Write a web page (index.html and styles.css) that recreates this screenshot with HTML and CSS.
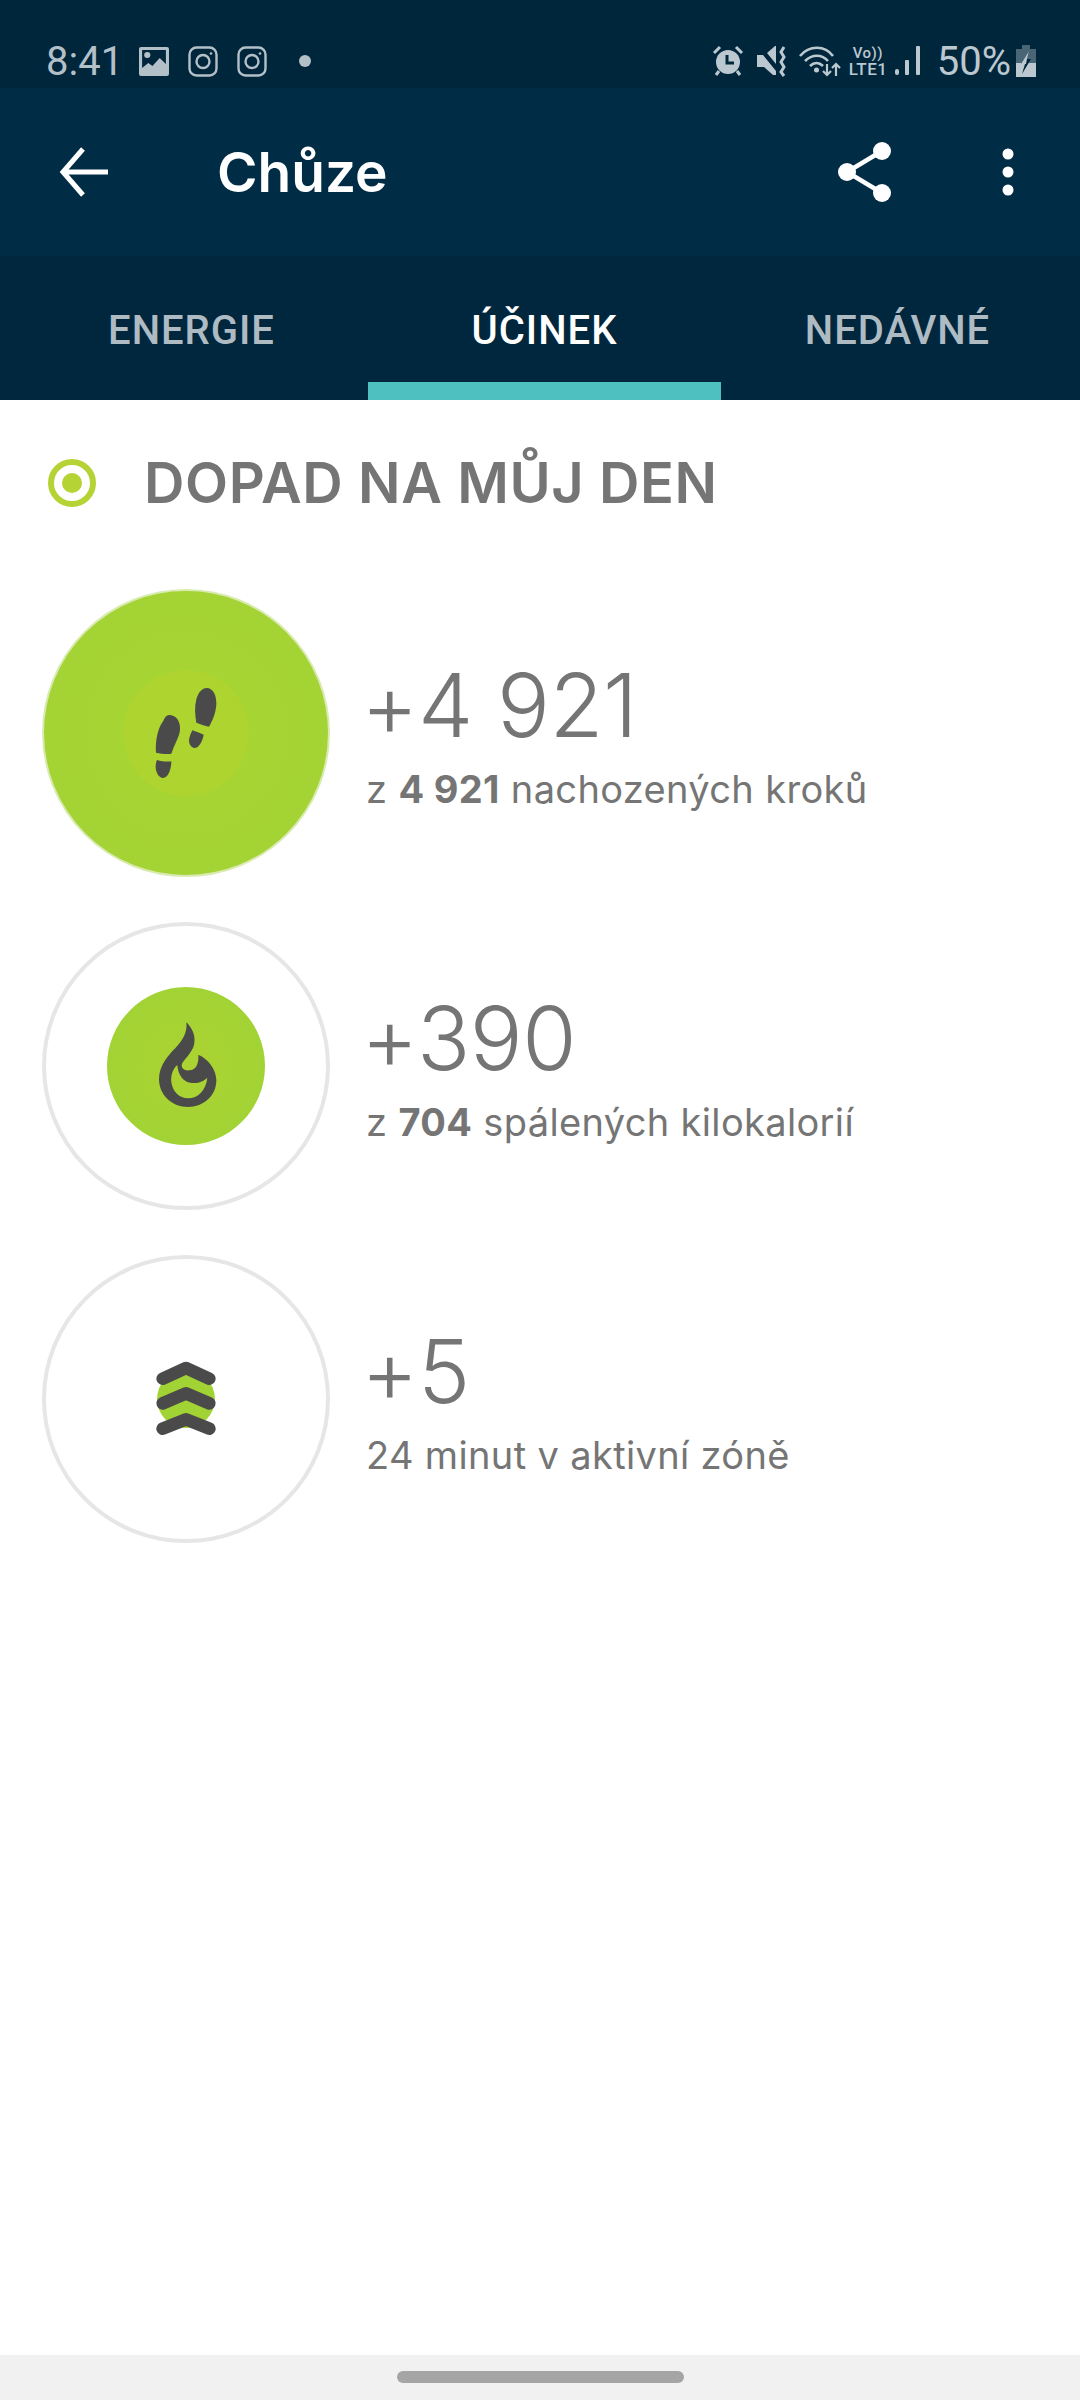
FILE: index.html
```html
<!DOCTYPE html>
<html lang="cs">
<head>
    <meta charset="UTF-8">
    <meta name="viewport" content="width=device-width, initial-scale=1">
    <title>Chůze</title>
    <link rel="stylesheet" href="styles.css">
</head>
<body>
    <div class="status-bar">
        <span class="clock">8:41</span>
        <svg class="st-icon st-image" width="30" height="29" viewBox="0 0 29 29" preserveAspectRatio="none">
            <path fill="#b4c0c8" fill-rule="evenodd" d="M2 0h25a2 2 0 0 1 2 2v25a2 2 0 0 1-2 2H2a2 2 0 0 1-2-2V2a2 2 0 0 1 2-2z"/>
            <path fill="#00263c" d="M3 3h23v14l-6-6-7 8-4-3-6 5z"/>
            <circle cx="8" cy="8" r="3" fill="#b4c0c8"/>
        </svg>
        <svg class="st-icon st-insta" width="30" height="31" viewBox="0 0 30 31" fill="none" stroke="#b4c0c8" stroke-width="2.4">
            <rect x="1.5" y="1.5" width="27" height="28" rx="7"/>
            <circle cx="15" cy="15.5" r="6.5"/>
            <circle cx="23" cy="7.5" r="1.3" fill="#b4c0c8" stroke="none"/>
        </svg>
        <svg class="st-icon st-insta" width="30" height="31" viewBox="0 0 30 31" fill="none" stroke="#b4c0c8" stroke-width="2.4">
            <rect x="1.5" y="1.5" width="27" height="28" rx="7"/>
            <circle cx="15" cy="15.5" r="6.5"/>
            <circle cx="23" cy="7.5" r="1.3" fill="#b4c0c8" stroke="none"/>
        </svg>
        <span class="st-dot"></span>

        <div class="status-right">
            <svg width="32" height="32" viewBox="0 0 32 32">
                <circle cx="16" cy="17" r="12" fill="#bcc8cf"/>
                <path d="M15 10v8h7" fill="none" stroke="#00263c" stroke-width="3"/>
                <path d="M2 8l6-6M30 8l-6-6M7 26l-3 4M25 26l3 4" stroke="#bcc8cf" stroke-width="3" fill="none"/>
            </svg>
            <svg class="st-mute" width="32" height="32" viewBox="0 0 32 32">
                <path fill="#bcc8cf" d="M1 10h6l13 16v4h-3L8 22H1zM11 8l8-7h1v18z"/>
                <path d="M28 2l-3 5 3 5-3 5 3 5-3 5 3 4" fill="none" stroke="#bcc8cf" stroke-width="3"/>
            </svg>
            <svg class="st-wifi" width="42" height="32" viewBox="0 0 42 32" fill="none" stroke="#bcc8cf" stroke-width="2.6">
                <path d="M1 11C10 0 26 0 34 11"/>
                <path d="M6 16c7-7 17-7 23 0"/>
                <path d="M11 21c4-4 9-4 13 0"/>
                <circle cx="17.5" cy="25" r="2.5" fill="#bcc8cf" stroke="none"/>
                <path d="M28 19v11M24 26l4 4 4-4M37 31V19M33 23l4-4 4 4" stroke-width="2.2"/>
            </svg>
            <div class="volte">
                <span class="vo">Vo))</span>
                <span class="lte">LTE1</span>
            </div>
            <svg class="st-signal" width="26" height="30" viewBox="0 0 26 30" fill="#bcc8cf">
                <rect x="0" y="23" width="4" height="6" rx="2"/>
                <rect x="10" y="14" width="4" height="15" rx="1"/>
                <rect x="21" y="0" width="4" height="29" rx="1"/>
            </svg>
            <span class="battery-pct">50%</span>
            <svg class="st-battery" width="20" height="32" viewBox="0 0 20 32">
                <path fill="#4a6575" d="M6 0h8v4h6v14H0V4h6z"/>
                <path fill="#bcc8cf" d="M0 18h20v14H0z"/>
                <path fill="#00263c" d="M13 6L5 19h4l-3 10 9-15h-4l2-8z"/>
                <path fill="#bcc8cf" d="M13 6L5 19h5l1-5h-0l2-8z"/>
            </svg>
        </div>
    </div>

    <div class="app-bar">
        <svg class="back" width="64" height="64" viewBox="0 0 64 64" fill="none" stroke="#fff" stroke-width="5">
            <path d="M36 9L16 32l20 23M16 32h45"/>
        </svg>
        <span class="title">Chůze</span>
        <svg class="share" width="60" height="64" viewBox="0 0 60 64" fill="#fff">
            <path d="M49 11L14 32l35 21" fill="none" stroke="#fff" stroke-width="4.5"/>
            <circle cx="49" cy="11" r="9"/>
            <circle cx="14" cy="32" r="9"/>
            <circle cx="49" cy="53" r="9"/>
        </svg>
        <svg class="more" width="12" height="48" viewBox="0 0 12 48" fill="#fff">
            <circle cx="6" cy="6" r="5.5"/>
            <circle cx="6" cy="24" r="5.5"/>
            <circle cx="6" cy="42" r="5.5"/>
        </svg>
    </div>

    <div class="tabs">
        <div class="tab">ENERGIE</div>
        <div class="tab active">ÚČINEK</div>
        <div class="tab">NEDÁVNÉ</div>
    </div>

    <div class="content">
        <div class="section-head">
            <span class="target"><span class="target-dot"></span></span>
            <h2>DOPAD NA MŮJ DEN</h2>
        </div>

        <div class="row">
            <div class="badge badge-full">
                <svg width="180" height="180" viewBox="-12 9 540 540" fill="#4a4a4a">
                    <path d="M206 225c22 0 36 18 34 44-2 22-16 42-26 72-12 2-32 0-46-3-2-34 4-72 22-96 5-10 10-17 16-17z"/>
                    <path d="M171 360c14 4 30 6 43 4 0 16-6 48-24 50-16 0-24-22-23-36 0-6 2-14 4-18z"/>
                    <path d="M320 144c20 0 30 24 29 50-2 26-12 48-22 66-12-2-28-8-38-12-4-24-6-46 0-70 6-22 18-34 31-34z"/>
                    <path d="M277 271c10 4 24 8 34 13-2 14-12 40-28 40-14-2-18-20-15-30 2-8 5-16 9-23z"/>
                </svg>
            </div>
            <div class="row-text">
                <div class="amount">+4 921</div>
                <div class="detail">z <strong>4 921</strong> nachozených kroků</div>
            </div>
        </div>

        <div class="row">
            <div class="badge">
                <div class="badge-inner">
                    <svg width="158" height="158" viewBox="22 22 474 474">
                        <path fill="#4a4a4a" fill-rule="evenodd" d="M260 128c16 16 28 38 24 62-3 24-24 42-36 60-6 12 2 24 22 22 16-2 28-14 26-46 24 8 54 40 54 76 0 46-38 80-85 80-48 0-87-36-87-84 0-40 26-70 50-94 20-20 36-46 32-76zM233 256c-14 12-20 32-18 52 4 28 24 48 50 48 30 0 54-24 58-62-10 10-26 18-46 16-28-2-42-26-44-54z"/>
                    </svg>
                </div>
            </div>
            <div class="row-text">
                <div class="amount">+390</div>
                <div class="detail">z <strong>704</strong> spálených kilokalorií</div>
            </div>
        </div>

        <div class="row">
            <div class="badge">
                <svg width="140" height="120" viewBox="-12 -3 420 360">
                    <circle cx="198" cy="177" r="87" fill="#a2d335"/>
                    <g fill="none" stroke="#4a4a4a" stroke-width="38" stroke-linecap="round" stroke-linejoin="round">
                        <path d="M128 116L198 84l70 32"/>
                        <path d="M128 190L198 160l70 30"/>
                        <path d="M128 266L198 238l70 28"/>
                    </g>
                </svg>
            </div>
            <div class="row-text">
                <div class="amount">+5</div>
                <div class="detail">24 minut v aktivní zóně</div>
            </div>
        </div>
    </div>

    <div class="nav-bar">
        <span class="nav-pill"></span>
    </div>
</body>
</html>
```

FILE: styles.css
```css
* {
    box-sizing: border-box;
}
body {
    margin: 0;
    width: 1080px;
    height: 2400px;
    display: flex;
    flex-direction: column;
    background-color: #fff;
    font-family: Inter, sans-serif;
    color: #757575;
}

/* status bar */
.status-bar {
    height: 88px;
    flex: none;
    display: flex;
    align-items: center;
    padding: 34px 44px 0 46px;
    background-color: #00263c;
}
.clock {
    font-family: Roboto, sans-serif;
    font-size: 40px;
    color: #b4c0c8;
    width: 93px;
}
.st-icon {
    flex: none;
}
.st-insta {
    margin-left: 19px;
}
.st-dot {
    width: 12px;
    height: 12px;
    margin-left: 32px;
    border-radius: 50%;
    background-color: #b4c0c8;
}
.status-right {
    margin-left: auto;
    display: flex;
    align-items: center;
    color: #bcc8cf;
}
.st-mute {
    margin-left: 12px;
}
.st-wifi {
    margin-left: 11px;
}
.volte {
    margin-left: 8px;
    width: 38px;
    display: flex;
    flex-direction: column;
    font-family: Roboto, sans-serif;
    font-weight: 500;
    line-height: 16px;
}
.vo {
    font-size: 15px;
    letter-spacing: 0.5px;
    padding-left: 4px;
}
.lte {
    font-size: 17px;
    letter-spacing: 0.5px;
}
.st-signal {
    margin-left: 8px;
}
.battery-pct {
    margin-left: 16px;
    font-family: Roboto, sans-serif;
    font-size: 40px;
}
.st-battery {
    margin-left: 5px;
}

/* app bar */
.app-bar {
    height: 168px;
    flex: none;
    display: flex;
    align-items: center;
    padding: 0 66px 0 47px;
    background-color: #002d45;
}
.back {
    flex: none;
}
.title {
    margin-left: 106px;
    font-size: 55px;
    font-weight: 600;
    color: #fff;
}
.share {
    margin-left: auto;
}
.more {
    margin-left: 109px;
}

/* tabs */
.tabs {
    height: 144px;
    flex: none;
    display: flex;
    padding-left: 15px;
    background-color: #00273d;
}
.tab {
    width: 353px;
    display: flex;
    align-items: center;
    justify-content: center;
    padding-top: 22px;
    border-bottom: 18px solid transparent;
    font-family: Roboto, sans-serif;
    font-size: 40px;
    font-weight: 500;
    letter-spacing: 1px;
    color: #aebbc3;
}
.tab.active {
    color: #fff;
    border-bottom-color: #4fc0c0;
}

/* content */
.content {
    flex: 1;
    padding: 59px 42px 0;
}
.section-head {
    display: flex;
    align-items: center;
    height: 48px;
    margin-bottom: 82px;
}
.target {
    width: 48px;
    height: 48px;
    margin-left: 6px;
    display: flex;
    align-items: center;
    justify-content: center;
    border: 6px solid #b5d335;
    border-radius: 50%;
}
.target-dot {
    width: 20px;
    height: 20px;
    border-radius: 50%;
    background-color: #b5d335;
}
h2 {
    margin: 0 0 0 48px;
    font-size: 56px;
    font-weight: 600;
    letter-spacing: 0.6px;
    color: #757575;
}
.row {
    display: flex;
    align-items: center;
    margin-bottom: 45px;
}
.badge {
    width: 288px;
    height: 288px;
    flex: none;
    display: flex;
    align-items: center;
    justify-content: center;
    border: 4px solid #e6e6e6;
    border-radius: 50%;
}
.badge-full {
    border: 2px solid #d9ebb0;
    background: radial-gradient(circle, #aed430 0, #aed430 62px, #a5d433 64px, #a2d335 100%);
}
.badge-inner {
    width: 158px;
    height: 158px;
    display: flex;
    border-radius: 50%;
    background: radial-gradient(circle, #acd331 0, #a2d335 70%);
}
.row-text {
    margin-left: 36px;
}
.amount {
    margin-left: -5px;
    font-size: 88px;
    font-weight: 300;
    letter-spacing: -0.5px;
    line-height: 100px;
}
.detail {
    margin-top: 11px;
    font-size: 38px;
    letter-spacing: 0.35px;
    line-height: 46px;
}
.detail strong {
    font-weight: 700;
}

/* navigation bar */
.nav-bar {
    height: 45px;
    flex: none;
    display: flex;
    justify-content: center;
    padding-top: 16px;
    background-color: #f1f1f1;
}
.nav-pill {
    width: 287px;
    height: 12px;
    border-radius: 6px;
    background-color: #a5a5a5;
}
```
